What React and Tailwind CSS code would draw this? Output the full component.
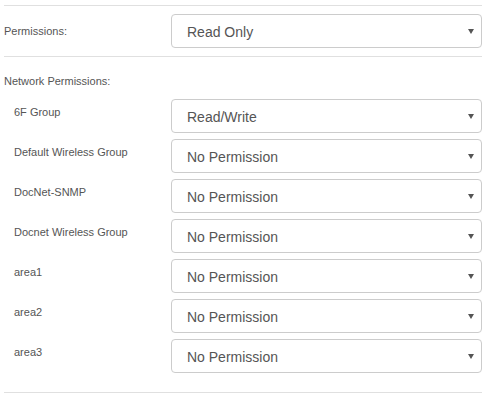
const groups = [
  { name: "6F Group", value: "Read/Write" },
  { name: "Default Wireless Group", value: "No Permission" },
  { name: "DocNet-SNMP", value: "No Permission" },
  { name: "Docnet Wireless Group", value: "No Permission" },
  { name: "area1", value: "No Permission" },
  { name: "area2", value: "No Permission" },
  { name: "area3", value: "No Permission" },
];

function Select({ value }) {
  return (
    <div className="w-[311px] h-[34px] shrink-0 flex items-center justify-between border border-[#ccc] rounded-[4px] bg-white pl-[15px] pr-[7px]">
      <span className="text-[14px] text-[#555] pt-[2px]">{value}</span>
      <svg width="6" height="5" viewBox="0 0 6 5">
        <path d="M0 0 H6 L3 5 Z" fill="#555" />
      </svg>
    </div>
  );
}

export default function App() {
  return (
    <div
      className="w-[487px] h-[397px] bg-white pt-[5px] pl-[4px] pr-[5px]"
      style={{ fontFamily: '"Liberation Sans", Arial, sans-serif' }}
    >
      {/* Permissions */}
      <div className="border-t border-[#e0e0e0] pt-[8px] pb-[8px] flex items-center justify-between">
        <span className="text-[11px] text-[#555]">Permissions:</span>
        <Select value="Read Only" />
      </div>

      {/* Network Permissions */}
      <div className="border-t border-b border-[#e0e0e0] pt-[16px] pb-[19px]">
        <div className="text-[11px] leading-[16px] text-[#555] mb-[10px]">Network Permissions:</div>
        <div className="flex flex-col gap-[6px]">
          {groups.map((g) => (
            <div key={g.name} className="flex justify-between">
              <span className="pl-[10px] pt-[5px] text-[11px] leading-[16px] text-[#555]">{g.name}</span>
              <Select value={g.value} />
            </div>
          ))}
        </div>
      </div>
    </div>
  );
}
